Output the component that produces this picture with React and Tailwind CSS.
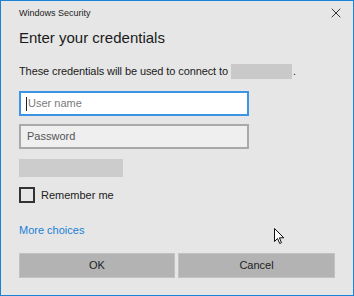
import { X } from "lucide-react";

const font = { fontFamily: '"Liberation Sans", Arial, sans-serif' };

export default function App() {
  return (
    <div
      className="relative flex h-[296px] w-[354px] flex-col border border-[#1883d7] bg-[#e6e6e6] px-[18px] text-[#1a1a1a]"
      style={font}
    >
      {/* title bar */}
      <div className="flex h-[24px] items-center justify-between">
        <span className="text-[9px] leading-[12px] text-[#222]">Windows Security</span>
        <X className="-mr-[9px] h-[16px] w-[16px] text-[#333]" strokeWidth={1.5} />
      </div>

      <h1 className="mt-[3px] text-[15px] leading-[20px] font-normal">Enter your credentials</h1>

      <p className="mt-[15px] flex h-[16px] items-center text-[11px] leading-[16px] tracking-[-0.1px]">
        These credentials will be used to connect to
        <span className="ml-[3px] inline-block h-[15px] w-[61px] bg-[#c9c9c9]" />
        <span className="ml-[1px]">.</span>
      </p>

      {/* fields */}
      <div className="mt-[12px] flex h-[25px] w-[230px] items-center border-2 border-[#3b94e4] bg-white pl-[5px]">
        <span className="mr-[1px] h-[14px] w-px bg-[#222]" />
        <span className="text-[11px] text-[#7a7a7a]">User name</span>
      </div>
      <div className="mt-[8px] flex h-[25px] w-[230px] items-center border-2 border-[#a9a9a9] bg-[#efefef] pl-[6px]">
        <span className="text-[11px] text-[#555]">Password</span>
      </div>

      <div className="mt-[10px] h-[18px] w-[104px] bg-[#cccccc]" />

      <label className="mt-[10px] flex items-center gap-[6px]">
        <span className="h-[16px] w-[16px] border-2 border-[#333]" />
        <span className="text-[11px] text-[#222]">Remember me</span>
      </label>

      <a className="mt-[17px] text-[11px] leading-[18px] text-[#1a7fd6]">More choices</a>

      <div className="mt-[14px] flex gap-[3px]">
        <button className="flex h-[25px] w-[156px] items-center justify-center border border-[#c2c2c2] bg-[#b3b3b3] text-[11px] text-[#222]">
          OK
        </button>
        <button className="flex h-[25px] w-[157px] items-center justify-center border border-[#c2c2c2] bg-[#b3b3b3] text-[11px] text-[#222]">
          Cancel
        </button>
      </div>

      {/* mouse pointer */}
      <svg className="absolute left-[273px] top-[227px]" width="11" height="17" viewBox="0 0 11 17">
        <path d="M0.5 0.5 L0.5 13.5 L3.5 10.5 L5.7 15.5 L7.5 14.7 L5.4 9.8 L9.8 9.8 Z" fill="#fff" stroke="#111" strokeWidth="1" strokeLinejoin="round" />
      </svg>
    </div>
  );
}
